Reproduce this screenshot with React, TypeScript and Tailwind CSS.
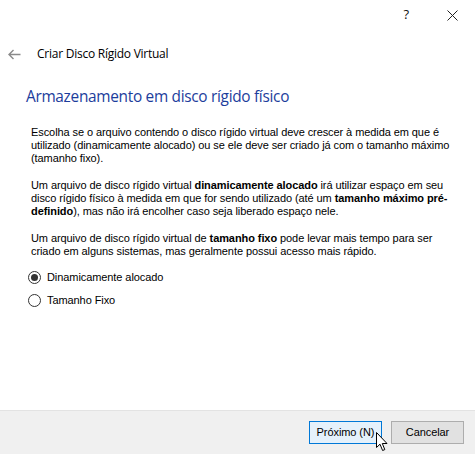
import React from "react";

const body = "font-['Liberation_Sans',Arial,sans-serif] text-[11px] leading-[13px] text-[#000] tracking-[-0.08px]";

function Radio({ checked, label }: { checked?: boolean; label: string }) {
    return (
        <div className="flex items-center h-[16px]">
            <span className="w-[13px] h-[13px] rounded-full border border-[#333] bg-white flex items-center justify-center">
                {checked && <span className="w-[7px] h-[7px] rounded-full bg-[#333]" />}
            </span>
            <span className={`${body} ml-[6px]`}>{label}</span>
        </div>
    );
}

export default function App() {
    return (
        <div className="w-[475px] h-[454px] bg-white flex flex-col relative font-['Open_Sans',sans-serif] overflow-hidden">
            {/* caption buttons */}
            <div className="h-[30px] flex justify-end items-center pr-[17px] text-[#111]">
                <span className="text-[13px] mr-[38px]">?</span>
                <svg width="11" height="11" viewBox="0 0 11 11" className="mt-[1px]">
                    <path d="M0.5 0.5 L10.5 10.5 M10.5 0.5 L0.5 10.5" stroke="#222" strokeWidth="1" />
                </svg>
            </div>

            {/* nav row */}
            <div className="h-[24px] mt-[12px] flex items-center">
                <svg width="13" height="11" viewBox="0 0 13 11" className="ml-[8px]">
                    <path d="M12.5 5.5 H1.5 M5.5 1 L1 5.5 L5.5 10" stroke="#8a8a8a" strokeWidth="1.4" fill="none" />
                </svg>
                <span className="ml-[16px] text-[12px] text-[#000] tracking-[-0.25px]">Criar Disco Rígido Virtual</span>
            </div>

            {/* heading */}
            <h1 className="mt-[20px] ml-[26px] h-[22px] leading-[22px] text-[15.4px] text-[#1c3d9c] tracking-[-0.3px]">
                Armazenamento em disco rígido físico
            </h1>

            {/* text */}
            <div className={`${body} ml-[31px] mt-[18px] whitespace-nowrap`}>
                <p>
                    Escolha se o arquivo contendo o disco rígido virtual deve crescer à medida em que é<br />
                    utilizado (dinamicamente alocado) ou se ele deve ser criado já com o tamanho máximo<br />
                    (tamanho fixo).
                </p>
                <p className="mt-[14px]">
                    Um arquivo de disco rígido virtual <b>dinamicamente alocado</b> irá utilizar espaço em seu<br />
                    disco rígido físico à medida em que for sendo utilizado (até um <b>tamanho máximo pré-</b><br />
                    <b>definido</b>), mas não irá encolher caso seja liberado espaço nele.
                </p>
                <p className="mt-[14px]">
                    Um arquivo de disco rígido virtual de <b>tamanho fixo</b> pode levar mais tempo para ser<br />
                    criado em alguns sistemas, mas geralmente possui acesso mais rápido.
                </p>
            </div>

            {/* radios */}
            <div className="ml-[28px] mt-[11px] flex flex-col gap-[7px]">
                <Radio checked label="Dinamicamente alocado" />
                <Radio label="Tamanho Fixo" />
            </div>

            <div className="flex-1" />

            {/* footer */}
            <div className="h-[44px] bg-[#f0f0f0] border-t border-[#e3e3e3] flex items-center justify-end gap-[9px] pr-[11px]">
                <button className={`${body} w-[73px] h-[23px] border border-[#0078d7] bg-[#e5f1fb]`}>
                    Próximo (N)
                </button>
                <button className={`${body} w-[73px] h-[23px] border border-[#adadad] bg-[#e1e1e1]`}>
                    Cancelar
                </button>
            </div>

            {/* mouse cursor */}
            <svg width="13" height="20" viewBox="0 0 13 20" className="absolute left-[376px] top-[432px]">
                <path d="M0.5 0.5 V15.5 L4 12.2 L6.6 18.5 L8.8 17.6 L6.3 11.5 H11 Z" fill="#fff" stroke="#000" strokeWidth="1" strokeLinejoin="round" />
            </svg>
        </div>
    );
}
